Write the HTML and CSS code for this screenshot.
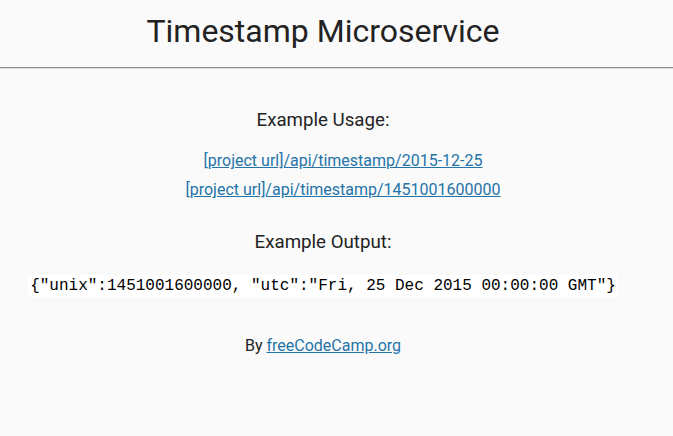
FILE: index.html
```html
<!DOCTYPE html>
<html lang="en">
<head>
<meta charset="utf-8">
<title>Timestamp Microservice</title>
<link rel="stylesheet" href="styles.css">
</head>
<body>
  <div class="page">
    <h1 class="title">Timestamp Microservice</h1>
  </div>
  <hr class="rule">
  <div class="page">
    <h3 class="heading heading-usage">Example Usage:</h3>
    <ul class="examples">
      <li><a href="#">[project url]/api/timestamp/2015-12-25</a></li>
      <li><a href="#">[project url]/api/timestamp/1451001600000</a></li>
    </ul>
    <h3 class="heading heading-output">Example Output:</h3>
    <p class="output"><code class="code">{"unix":1451001600000, "utc":"Fri, 25 Dec 2015 00:00:00 GMT"}</code></p>
    <p class="footer">By <a href="#">freeCodeCamp.org</a></p>
  </div>
</body>
</html>
```
FILE: styles.css
```css
html, body {
  margin: 0;
  padding: 0;
}
body {
  background: #fafafa;
  color: #222;
  font-family: Roboto, "Liberation Sans", sans-serif;
  font-size: 16px;
  line-height: 22.4px;
}
.page {
  width: 646px;
  text-align: center;
}
.title {
  margin: 0;
  padding-top: 12px;
  font-size: 32px;
  font-weight: 400;
  line-height: 38px;
}
.rule {
  margin: 17px 0 0;
  border: 0;
  border-top: 1px solid #8c8c8c;
  border-bottom: 1px solid #dcdcdc;
  height: 0;
}
.heading {
  margin: 0;
  font-size: 18.72px;
  font-weight: 400;
  line-height: 22.4px;
}
.heading-usage {
  margin-top: 40px;
}
.examples {
  list-style: none;
  margin: 18px 0 0;
  padding: 0 0 0 40px;
}
.examples li {
  line-height: 24px;
  margin-bottom: 5px;
}
a {
  color: #2574a9;
}
.heading-output {
  margin-top: 29px;
}
.output {
  margin: 21px 0 0;
  line-height: 22px;
}
.code {
  display: inline-block;
  font-family: "Liberation Mono", monospace;
  font-size: 16px;
  line-height: 18px;
  padding: 2px;
  background: #fff;
  color: #000;
  vertical-align: top;
}
.footer {
  margin: 38px 0 0;
}
```
